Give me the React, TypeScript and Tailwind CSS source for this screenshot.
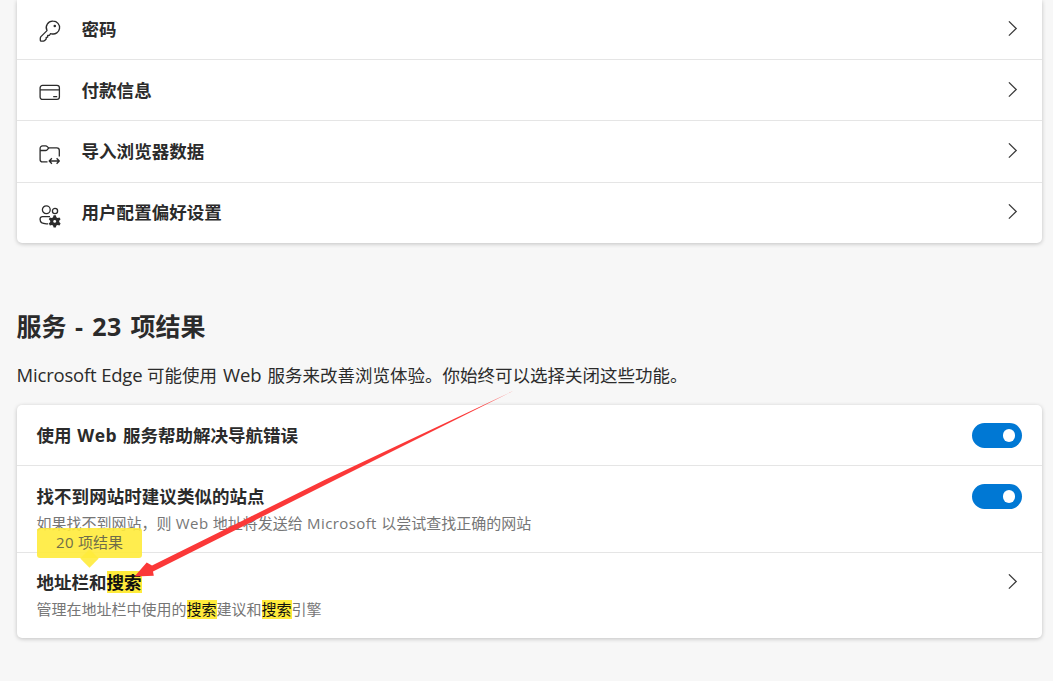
import type { ReactNode } from "react";
import { clsx } from "clsx";

const Chevron = () => (
  <svg width="10" height="16" viewBox="0 0 10 16" fill="none" stroke="#3b3b3b" strokeWidth="1.3" className="mr-6 shrink-0">
    <path d="M.9 .4 8.2 7.5 .9 14.6" />
  </svg>
);

const KeyIcon = () => (
  <svg width="22" height="22" viewBox="0 0 22 22" fill="none" stroke="#2b2b2b" strokeWidth="1.3" strokeLinejoin="round">
    <path d="M14.2 1.2a6.4 6.4 0 1 1-1.6 12.6l-1.2-.1-.9 1.6H8.7v1.8l-1.5.3v1.6l-1.7 1.7-1 .4H2.2a.9.9 0 0 1-.9-.9v-2.3l.4-1 6.3-6.3A6.4 6.4 0 0 1 14.2 1.2Z" />
    <circle cx="15.8" cy="6" r="1.3" fill="#2b2b2b" stroke="none" />
  </svg>
);

const CardIcon = () => (
  <svg width="22" height="22" viewBox="0 0 22 22" fill="none" stroke="#2b2b2b" strokeWidth="1.3">
    <rect x="1.1" y="4.4" width="19.3" height="14" rx="2.4" />
    <path d="M1.1 8.9h19.3M14.2 15.6h4" />
  </svg>
);

const FolderIcon = () => (
  <svg width="22" height="22" viewBox="0 0 22 22" fill="none" stroke="#2b2b2b" strokeWidth="1.3" strokeLinejoin="round">
    <path d="M8.5 18.9H3.6a2.5 2.5 0 0 1-2.5-2.5V5.4a2.5 2.5 0 0 1 2.5-2.5h3.1c.7 0 1.2.3 1.6.7l1.2 1.3h8.3a2.5 2.5 0 0 1 2.5 2.5v6.2" />
    <path d="M1.1 7.5h5.4c.8 0 1.2-.2 1.7-.7l1.7-1.9" />
    <path d="M10.3 18h9.7M12.9 15.2l-2.7 2.8 2.7 2.8M17.6 15.2l2.7 2.8-2.7 2.8" strokeWidth="1.3" />
  </svg>
);

const PeopleIcon = () => (
  <svg width="22" height="24" viewBox="0 0 22 24" fill="none" stroke="#2b2b2b" strokeWidth="1.3">
    <circle cx="7.3" cy="5.8" r="3.9" />
    <circle cx="16" cy="7" r="2.6" />
    <path d="M11 12.6H3.4a2.3 2.3 0 0 0-2.3 2.3v.7c0 2.6 2.6 4.2 6.2 4.2h1.9" />
    <g transform="translate(-.4 -1)">
      <path
        d="m15 12.3 2.2 0 .6 2 1.1.6 2-.5 1.1 1.9-1.4 1.5v1.2l1.4 1.5-1.1 1.9-2-.5-1.1.6-.6 2H15l-.6-2-1.1-.6-2 .5-1.1-1.9 1.4-1.5v-1.2l-1.4-1.5 1.1-1.9 2 .5 1.1-.6Z"
        fill="#2b2b2b"
        stroke="none"
      />
      <circle cx="16.1" cy="18.4" r="1.4" fill="#fff" stroke="none" />
    </g>
  </svg>
);

const Toggle = () => (
  <button
    role="switch"
    aria-checked="true"
    className="mr-5 flex h-[25px] w-[50px] shrink-0 items-center justify-end rounded-full bg-[#0078d4] pr-[7px]"
  >
    <span className="h-[13px] w-[12px] rounded-full bg-white" />
  </button>
);

const Mark = ({ children, className }: { children: ReactNode; className: string }) => (
  <mark className={clsx("inline-block bg-[#ffeb3b] text-[#101010]", className)}>{children}</mark>
);

const Card = ({ children, className }: { children: ReactNode; className?: string }) => (
  <div className={clsx("bg-white shadow-[0_1px_4px_rgba(0,0,0,0.22)]", className)}>{children}</div>
);

const profileItems = [
  { label: "密码", icon: <KeyIcon />, row: "h-[60px] border-b", iconTop: "mt-[20px]", text: "mt-[15px]", arrow: "mt-[21px]" },
  { label: "付款信息", icon: <CardIcon />, row: "h-[61px] border-b", iconTop: "mt-[21px]", text: "mt-[16px]", arrow: "mt-[22px]" },
  { label: "导入浏览器数据", icon: <FolderIcon />, row: "h-[62px] border-b", iconTop: "mt-[22px]", text: "mt-[16px]", arrow: "mt-[22px]" },
  { label: "用户配置偏好设置", icon: <PeopleIcon />, row: "h-[60px]", iconTop: "mt-[21px]", text: "mt-[15px]", arrow: "mt-[21px]" },
];

export default function App() {
  return (
    <div className="relative h-[681px] w-[1053px] overflow-hidden bg-[#f7f7f7] pl-[17px] font-['Open_Sans','Noto_Sans_CJK_SC',sans-serif] text-[17.5px] text-[#2b2b2b]">
      <Card className="w-[1025px] rounded-b-[5px]">
        {profileItems.map(item => (
          <div key={item.label} className={clsx("flex items-start border-[#e5e5e5]", item.row)}>
            <span className={clsx("ml-[22px] w-[42.5px]", item.iconTop)}>{item.icon}</span>
            <span className={clsx("flex-1 font-bold leading-[28px] tracking-[0.05px]", item.text)}>{item.label}</span>
            <span className={item.arrow}>
              <Chevron />
            </span>
          </div>
        ))}
      </Card>

      <h2 className="-ml-[0.5px] mt-[65px] text-[25px] font-bold leading-[36px] whitespace-nowrap">
        服务<span className="tracking-[0.6px] [word-spacing:1.4px]"> - 23 </span>项结果
      </h2>
      <p className="-ml-[0.5px] mt-[17px] h-[28px] leading-[28px] whitespace-nowrap">
        <span className="text-[18.5px] tracking-[-0.18px]">Microsoft Edge </span>可能使用
        <span className="text-[18.5px] [word-spacing:1px]"> Web </span>服务来改善浏览体验。你始终可以选择关闭这些功能。
      </p>

      <Card className="mt-[16px] w-[1025px] rounded-[5px]">
        <div className="flex h-[61px] items-center border-b border-[#e5e5e5] pl-[19.5px]">
          <span className="flex-1 font-bold leading-[28px]">
            使用<span className="tracking-[0.6px] [word-spacing:0.5px]"> Web </span>服务帮助解决导航错误
          </span>
          <Toggle />
        </div>
        <div className="flex h-[87px] items-start border-b border-[#e5e5e5] pt-[18px] pl-[19.5px]">
          <div className="flex-1">
            <div className="-mt-[2px] font-bold leading-[28px] tracking-[0.05px]">找不到网站时建议类似的站点</div>
            <div className="text-[15px] leading-[26px] text-[#767676]">
              如果找不到网站，则<span className="tracking-[0.4px]"> Web </span>地址将发送给
              <span className="tracking-[0.4px]"> Microsoft </span>以尝试查找正确的网站
            </div>
          </div>
          <Toggle />
        </div>
        <div className="flex h-[85px] items-start pt-[15px] pl-[19.5px]">
          <div className="relative flex-1">
            <div className="font-bold leading-[28px]">
              地址栏和<Mark className="leading-[22px]">搜索</Mark>
            </div>
            <div className="text-[15px] leading-[26px] text-[#767676]">
              管理在地址栏中使用的<Mark className="leading-[19px]">搜索</Mark>建议和<Mark className="leading-[19px]">搜索</Mark>引擎
            </div>
            {/* search hit bubble */}
            <div className="absolute -top-[40px] left-[0.5px] h-[30px] w-[105px] rounded-[3px] bg-[#ffeb3b]/90 text-center text-[15px] leading-[28px] text-[#6f6d4a]">
              <span className="absolute top-[23.5px] left-[46px] size-[13px] rotate-45 bg-[#ffeb3b]/90" />
              <span className="relative">
                <span className="tracking-[0.3px]">20 </span>项结果
              </span>
            </div>
          </div>
          <span className="mt-[6px]">
            <Chevron />
          </span>
        </div>
      </Card>

      {/* pointer drawn over the page */}
      <svg className="pointer-events-none absolute inset-0" width="1053" height="681" viewBox="0 0 1053 681">
        <path d="M513 391 325 479.8 152 565.5 146.7 562.5 134.5 576.5 153.8 575.8 153 571.5 335 480Z" fill="#fb3838" />
      </svg>
    </div>
  );
}
